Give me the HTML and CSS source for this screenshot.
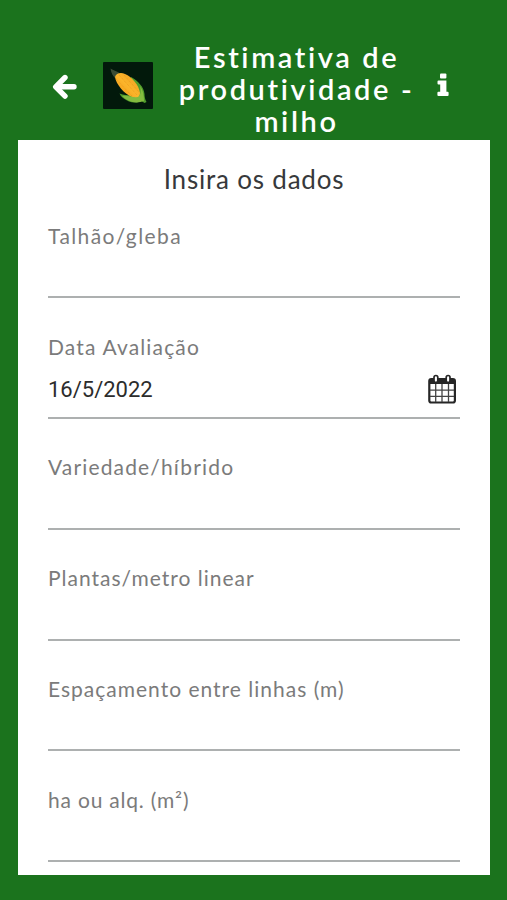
FILE: index.html
```html
<!DOCTYPE html>
<html lang="pt-BR">
<head>
    <meta charset="UTF-8">
    <meta name="viewport" content="width=device-width, initial-scale=1.0">
    <title>Estimativa de produtividade - milho</title>
    <link rel="stylesheet" href="styles.css">
</head>
<body>
    <header class="topbar">
        <button type="button" class="icon-button back-button" aria-label="Voltar">
            <svg width="25" height="26" viewBox="0 0 25 26" fill="none" stroke="#fff" stroke-width="5.4" stroke-linecap="round" stroke-linejoin="round">
                <path d="M13 3.5 3.7 12.8l9.3 9.3"/>
                <path d="M5.5 12.8h16.5"/>
            </svg>
        </button>

        <svg class="logo" width="50" height="47" viewBox="0 0 50 47">
            <defs>
                <linearGradient id="cob" x1="0" y1="1" x2="1" y2="0">
                    <stop offset="0" stop-color="#ef9410"/>
                    <stop offset="0.5" stop-color="#fbb52b"/>
                    <stop offset="1" stop-color="#e99a1c"/>
                </linearGradient>
            </defs>
            <rect width="50" height="47" rx="1" fill="#02190b"/>
            <path d="M7.5 6.5c3 2 6 2.500 9 4.500l-4.500 5c-2-2-4-5-4.500-9.500z" fill="#3b4d35"/>
            <path d="M28 15c7 4 13 10 13.500 17 0 3 .5 5 2 8l-2 1-3-2c-7 3-13 1-17-2-2-1-4-3-5-5.500 4 2 8 1.500 12 2z" fill="#4f9c2c"/>
            <path d="M12 15c1-4 6-5 10-3 7 3 14 11 15 19 0 5-4 6-8 4-8-3-16-13-17-20z" fill="url(#cob)"/>
            <path d="M19 34c6-1 11 2 16 1 3-2 3-6 2-11 3 4 4 9 4 15-8 3-16 1-22-5z" fill="#83bb3f"/>
            <path d="m16 13 18 20M13 17l16 17M21 13l15 17" stroke="#dc8512" stroke-width="0.5" stroke-dasharray="1 1" fill="none"/>
        </svg>

        <h1 class="title">Estimativa de<br>produtividade -<br>milho</h1>

        <button type="button" class="icon-button info-button" aria-label="Informações">
            <svg width="12" height="24" viewBox="0 0 12 24" fill="#fff">
                <rect x="3" y="0.5" width="6.4" height="5" rx="1"/>
                <path d="M1.5 7.5h7.9v11.2h1.2a1 1 0 0 1 1 1v2.3a1 1 0 0 1-1 1H1.4a1 1 0 0 1-1-1v-2.3a1 1 0 0 1 1-1h1.8v-7.2H1.5a1 1 0 0 1-1-1V8.5a1 1 0 0 1 1-1z"/>
            </svg>
        </button>
    </header>

    <main class="card">
        <h2 class="subtitle">Insira os dados</h2>

        <form class="form">
            <div class="field">
                <label for="talhao" class="label-widest">Talhão/gleba</label>
                <input type="text" id="talhao" name="talhao">
            </div>

            <div class="field field-date">
                <label for="data" class="label-wide">Data Avaliação</label>
                <div class="date-row">
                    <input type="text" id="data" name="data" value="16/5/2022">
                    <svg class="calendar" width="28" height="30" viewBox="0 0 28 30">
                        <rect x="1.3" y="5" width="25.6" height="23.5" rx="2" fill="#fff" stroke="#262626" stroke-width="2.2"/>
                        <path d="M1 5h26v5H1z" fill="#262626"/>
                        <path d="M7.7 10v18M14 10v18M20.5 10v18M2 16.2h24M2 22.3h24" stroke="#444" stroke-width="1.3"/>
                        <rect x="6" y="1.5" width="3.8" height="7" rx="1.9" fill="#fff" stroke="#262626" stroke-width="1.7"/>
                        <rect x="18.2" y="1.5" width="3.8" height="7" rx="1.9" fill="#fff" stroke="#262626" stroke-width="1.7"/>
                    </svg>
                </div>
            </div>

            <div class="field">
                <label for="variedade" class="label-wide">Variedade/híbrido</label>
                <input type="text" id="variedade" name="variedade">
            </div>

            <div class="field">
                <label for="plantas">Plantas/metro linear</label>
                <input type="text" id="plantas" name="plantas">
            </div>

            <div class="field">
                <label for="espacamento">Espaçamento entre linhas (m)</label>
                <input type="text" id="espacamento" name="espacamento">
            </div>

            <div class="field">
                <label for="area" class="label-narrow">ha ou alq. (m²)</label>
                <input type="text" id="area" name="area">
            </div>
        </form>
    </main>
</body>
</html>
```
FILE: styles.css
```css
* {
    margin: 0;
    padding: 0;
    box-sizing: border-box;
}

body {
    font-family: Lato, "Open Sans", sans-serif;
    background-color: #1b731d;
    height: 900px;
    padding: 40px 17px 25px 18px;
    overflow: hidden;
}

.topbar {
    display: flex;
    align-items: center;
    height: 100px;
    padding: 0 41px 0 34px;
}

.icon-button {
    display: flex;
    background: none;
    border: none;
    cursor: pointer;
}

.back-button {
    margin-top: -7px;
}

.logo {
    margin: -9px 0 0 26px;
    flex-shrink: 0;
}

.title {
    flex: 1;
    margin-top: -2px;
    padding-left: 3px;
    color: white;
    font-size: 29px;
    font-weight: 600;
    line-height: 32px;
    letter-spacing: 2.6px;
    text-align: center;
    white-space: nowrap;
}

.info-button {
    margin-top: -10px;
}

.card {
    background-color: white;
    height: 735px;
    padding: 22px 30px 0;
}

.subtitle {
    color: #37393b;
    font-size: 26px;
    font-weight: 400;
    line-height: 34px;
    letter-spacing: 0.8px;
    text-align: center;
}

.form {
    margin-top: 28px;
}

.field {
    display: flex;
    flex-direction: column;
    height: 74.3px;
    margin-bottom: 36.5px;
    border-bottom: 2px solid #adb0b0;
}

.field-date {
    height: 84.2px;
}

label {
    color: #7b7b7b;
    font-size: 21px;
    line-height: 24px;
    letter-spacing: 1px;
    white-space: nowrap;
}

.label-widest {
    letter-spacing: 1.4px;
}

.label-wide {
    letter-spacing: 1.15px;
}

.label-narrow {
    letter-spacing: 0.8px;
}

input {
    flex: 1;
    width: 100%;
    min-width: 0;
    border: none;
    outline: none;
    background: none;
    color: #2c2c2c;
    font-family: Roboto, sans-serif;
    font-size: 22px;
}

.date-row {
    display: flex;
    align-items: center;
    height: 38px;
    margin-top: 12px;
    padding-right: 4px;
}

.calendar {
    margin-top: -2px;
}
```
